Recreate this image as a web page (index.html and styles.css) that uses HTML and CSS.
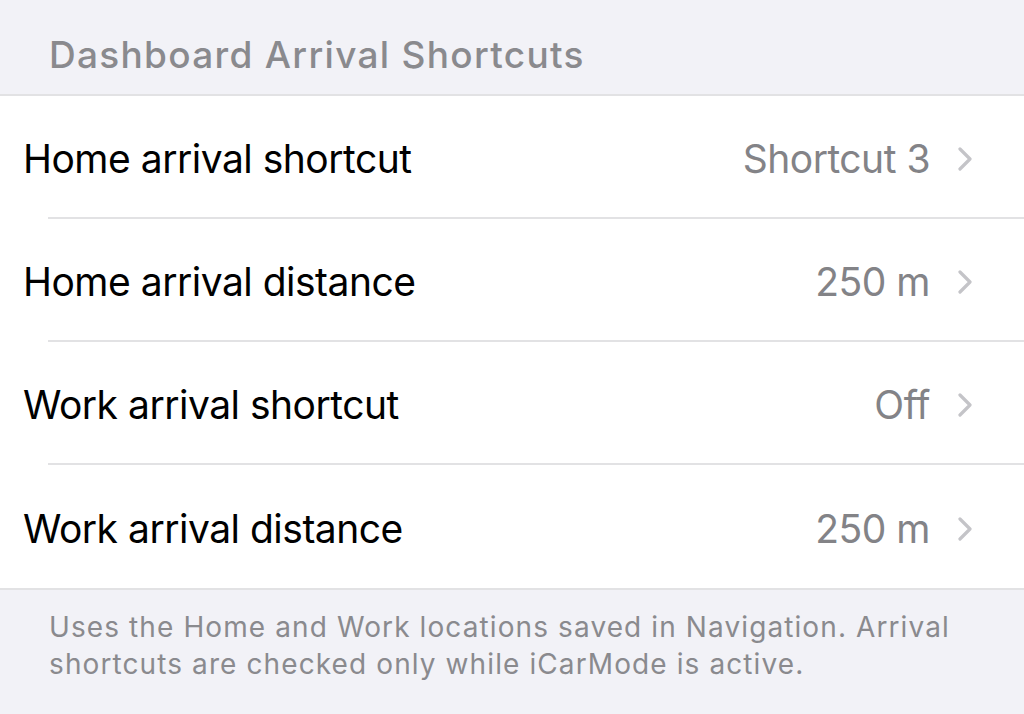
FILE: index.html
```html
<!DOCTYPE html>
<html lang="en">
<head>
    <meta charset="UTF-8">
    <title>Dashboard Arrival Shortcuts</title>
    <link rel="stylesheet" href="styles.css">
</head>
<body>
<div class="settings">
  <div class="section-header">Dashboard Arrival Shortcuts</div>

  <div class="group">
    <div class="row">
      <span class="label">Home arrival shortcut</span>
      <span class="value">Shortcut 3</span>
      <svg class="chevron" viewBox="0 0 14 24"><path d="M2 2 L12 12 L2 22"/></svg>
    </div>
    <div class="row">
      <span class="label">Home arrival distance</span>
      <span class="value">250 m</span>
      <svg class="chevron" viewBox="0 0 14 24"><path d="M2 2 L12 12 L2 22"/></svg>
    </div>
    <div class="row">
      <span class="label">Work arrival shortcut</span>
      <span class="value">Off</span>
      <svg class="chevron" viewBox="0 0 14 24"><path d="M2 2 L12 12 L2 22"/></svg>
    </div>
    <div class="row">
      <span class="label">Work arrival distance</span>
      <span class="value">250 m</span>
      <svg class="chevron" viewBox="0 0 14 24"><path d="M2 2 L12 12 L2 22"/></svg>
    </div>
  </div>

  <div class="section-footer">
    Uses the Home and Work locations saved in Navigation. Arrival shortcuts are checked only while iCarMode is active.
  </div>
</div>
</body>
</html>
```

FILE: styles.css
```css
body {
  margin: 0;
  padding: 0;
  background: #f2f2f7;
  font-family: Inter, "Liberation Sans", sans-serif;
}

.settings {
  width: 1024px;
  height: 714px;
  overflow: hidden;
}

.section-header {
  height: 94px;
  box-sizing: border-box;
  padding: 33px 0 0 49px;
  font-size: 37px;
  font-weight: 500;
  letter-spacing: 1.3px;
  color: #8a8a8e;
  line-height: 44px;
}

.group {
  background: #fff;
  border-top: 2px solid #e2e2e4;
  border-bottom: 2px solid #e2e2e4;
}

.row {
  display: flex;
  align-items: center;
  height: 123px;
  box-sizing: border-box;
  margin-left: 48px;
  padding: 4px 52px 0 0;
  border-bottom: 2px solid #e2e2e4;
}

.row:last-child {
  border-bottom: none;
}

.label {
  flex: 1;
  margin-left: -25px;
  font-size: 39px;
  letter-spacing: -0.5px;
  color: #000;
}

.value {
  font-size: 39px;
  letter-spacing: -0.5px;
  color: #838387;
}

.chevron {
  width: 14px;
  height: 24px;
  margin-left: 28px;
  fill: none;
  stroke: #c4c4c8;
  stroke-width: 3.2;
  stroke-linecap: round;
  stroke-linejoin: round;
}

.section-footer {
  padding: 19px 60px 0 49px;
  font-size: 28px;
  letter-spacing: 1.1px;
  line-height: 37px;
  color: #8a8a8e;
}
```
